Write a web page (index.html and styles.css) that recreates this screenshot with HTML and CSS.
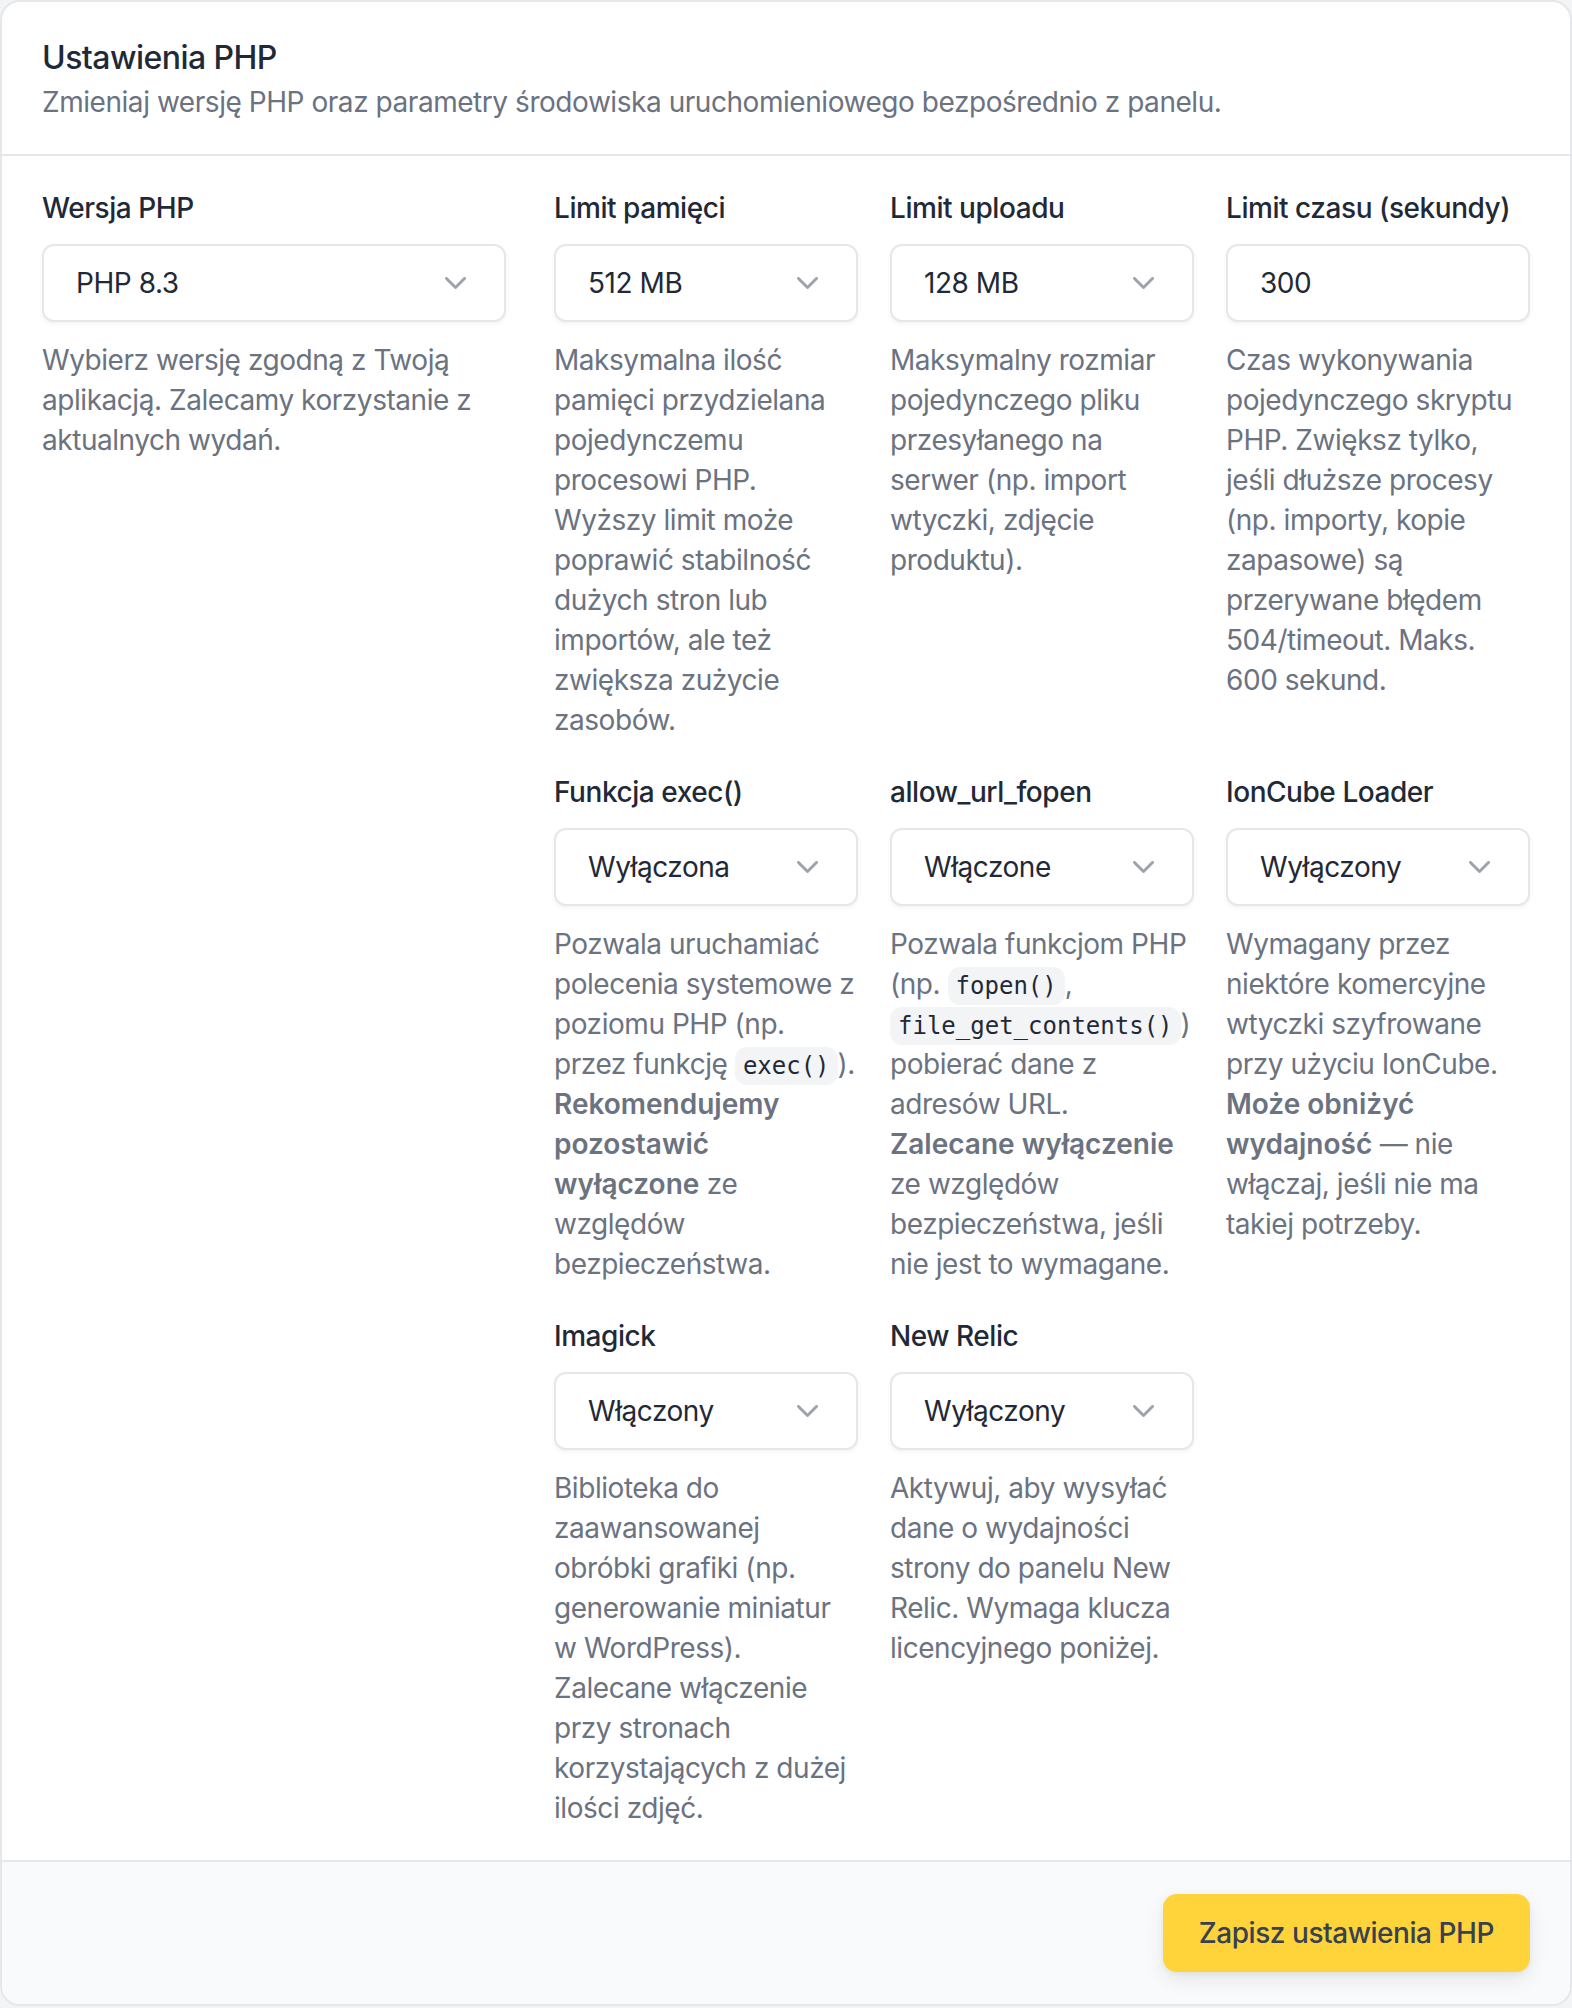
FILE: index.html
```html
<!DOCTYPE html>
<html lang="pl">
<head>
    <meta charset="UTF-8">
    <meta name="viewport" content="width=device-width, initial-scale=1.0">
    <title>Ustawienia PHP</title>
    <link rel="stylesheet" href="styles.css">
</head>
<body>
    <form class="card">
        <div class="card-header">
            <h2>Ustawienia PHP</h2>
            <p>Zmieniaj wersję PHP oraz parametry środowiska uruchomieniowego bezpośrednio z panelu.</p>
        </div>

        <div class="card-body">
            <div class="field field-version">
                <label class="field-label" for="phpVersion">Wersja PHP</label>
                <select class="field-control" id="phpVersion">
                    <option>PHP 8.3</option>
                    <option>PHP 8.2</option>
                    <option>PHP 8.1</option>
                </select>
                <p class="field-help">Wybierz wersję zgodną z Twoją aplikacją. Zalecamy korzystanie z aktualnych wydań.</p>
            </div>

            <div class="field-grid">
                <div class="field">
                    <label class="field-label" for="memoryLimit">Limit pamięci</label>
                    <select class="field-control" id="memoryLimit">
                        <option>512 MB</option>
                        <option>256 MB</option>
                        <option>1024 MB</option>
                    </select>
                    <p class="field-help">Maksymalna ilość pamięci przydzielana pojedynczemu procesowi PHP. Wyższy limit może poprawić stabilność dużych stron lub importów, ale też zwiększa zużycie zasobów.</p>
                </div>

                <div class="field">
                    <label class="field-label" for="uploadLimit">Limit uploadu</label>
                    <select class="field-control" id="uploadLimit">
                        <option>128 MB</option>
                        <option>64 MB</option>
                        <option>256 MB</option>
                    </select>
                    <p class="field-help">Maksymalny rozmiar pojedynczego pliku przesyłanego na serwer (np. import wtyczki, zdjęcie produktu).</p>
                </div>

                <div class="field">
                    <label class="field-label" for="timeLimit">Limit czasu (sekundy)</label>
                    <input class="field-control field-input" id="timeLimit" type="number" value="300" min="30" max="600">
                    <p class="field-help">Czas wykonywania pojedynczego skryptu PHP. Zwiększ tylko, jeśli dłuższe procesy (np. importy, kopie zapasowe) są przerywane błędem 504/timeout. Maks. 600 sekund.</p>
                </div>

                <div class="field">
                    <label class="field-label" for="execFunc">Funkcja exec()</label>
                    <select class="field-control" id="execFunc">
                        <option>Wyłączona</option>
                        <option>Włączona</option>
                    </select>
                    <p class="field-help">Pozwala uruchamiać polecenia systemowe z poziomu PHP (np. przez funkcję <code>exec()</code>). <strong>Rekomendujemy pozostawić wyłączone</strong> ze względów bezpieczeństwa.</p>
                </div>

                <div class="field">
                    <label class="field-label" for="urlFopen">allow_url_fopen</label>
                    <select class="field-control" id="urlFopen">
                        <option>Włączone</option>
                        <option>Wyłączone</option>
                    </select>
                    <p class="field-help">Pozwala funkcjom PHP (np. <code>fopen()</code>, <code>file_get_contents()</code>) pobierać dane z adresów URL. <strong>Zalecane wyłączenie</strong> ze względów bezpieczeństwa, jeśli nie jest to wymagane.</p>
                </div>

                <div class="field">
                    <label class="field-label" for="ioncube">IonCube Loader</label>
                    <select class="field-control" id="ioncube">
                        <option>Wyłączony</option>
                        <option>Włączony</option>
                    </select>
                    <p class="field-help">Wymagany przez niektóre komercyjne wtyczki szyfrowane przy użyciu IonCube. <strong>Może obniżyć wydajność</strong> — nie włączaj, jeśli nie ma takiej potrzeby.</p>
                </div>

                <div class="field">
                    <label class="field-label" for="imagick">Imagick</label>
                    <select class="field-control" id="imagick">
                        <option>Włączony</option>
                        <option>Wyłączony</option>
                    </select>
                    <p class="field-help">Biblioteka do zaawansowanej obróbki grafiki (np. generowanie miniatur w WordPress). Zalecane włączenie przy stronach korzystających z dużej ilości zdjęć.</p>
                </div>

                <div class="field">
                    <label class="field-label" for="newRelic">New Relic</label>
                    <select class="field-control" id="newRelic">
                        <option>Wyłączony</option>
                        <option>Włączony</option>
                    </select>
                    <p class="field-help">Aktywuj, aby wysyłać dane o wydajności strony do panelu New Relic. Wymaga klucza licencyjnego poniżej.</p>
                </div>
            </div>
        </div>

        <div class="card-footer">
            <button type="submit" class="btn-save">Zapisz ustawienia PHP</button>
        </div>
    </form>
</body>
</html>
```

FILE: styles.css
```css
* {
    margin: 0;
    padding: 0;
    box-sizing: border-box;
}

body {
    font-family: 'Inter', 'Noto Sans', sans-serif;
    background: #f3f4f6;
    color: #1f2937;
    font-size: 28px;
    line-height: 40px;
    letter-spacing: -0.45px;
}

.card {
    display: block;
    background: #fff;
    border: 2px solid #e5e7eb;
    border-radius: 20px;
    overflow: hidden;
}

.card-header {
    padding: 32px 40px;
    border-bottom: 2px solid #e5e7eb;
}

.card-header h2 {
    font-size: 32px;
    line-height: 48px;
    font-weight: 500;
    letter-spacing: -0.55px;
    color: #1f2937;
}

.card-header p {
    color: #6b7280;
}

.card-body {
    display: grid;
    grid-template-columns: repeat(12, 1fr);
    gap: 48px;
    padding: 32px 40px;
}

.field-version {
    grid-column: span 4;
}

.field-grid {
    grid-column: span 8;
    display: grid;
    grid-template-columns: repeat(3, 1fr);
    gap: 32px;
    align-items: start;
}

.field-label {
    display: block;
    font-weight: 500;
    color: #1f2937;
    margin-bottom: 16px;
}

.field-control {
    display: block;
    width: 100%;
    height: 78px;
    padding: 0 70px 0 32px;
    font-family: inherit;
    font-size: 28px;
    letter-spacing: inherit;
    color: #1f2937;
    background: #fff url("data:image/svg+xml,%3Csvg xmlns='http://www.w3.org/2000/svg' width='21' height='12' viewBox='0 0 21 12'%3E%3Cpath d='M1.5 1.5l9 9 9-9' fill='none' stroke='%239ca3af' stroke-width='3' stroke-linecap='round' stroke-linejoin='round'/%3E%3C/svg%3E") no-repeat right 38px center;
    border: 2px solid #e5e7eb;
    border-radius: 12px;
    box-shadow: 0 2px 4px rgba(0, 0, 0, 0.05);
    appearance: none;
    -webkit-appearance: none;
}

.field-input {
    background-image: none;
    padding-right: 32px;
}

.field-input::-webkit-inner-spin-button,
.field-input::-webkit-outer-spin-button {
    -webkit-appearance: none;
    margin: 0;
}

.field-help {
    margin-top: 18px;
    color: #6b7280;
}

.field-help strong {
    font-weight: 600;
    letter-spacing: 0;
    color: #6b7280;
}

.field-help code {
    font-family: 'DejaVu Sans Mono', 'Liberation Mono', monospace;
    font-size: 24px;
    line-height: 1;
    letter-spacing: 0;
    color: #1f2937;
    background: #f3f4f6;
    padding: 5px 8px;
    border-radius: 12px;
}

.card-footer {
    display: flex;
    justify-content: flex-end;
    padding: 32px 40px;
    background: #f9fafb;
    border-top: 2px solid #e5e7eb;
}

.btn-save {
    font-family: inherit;
    font-size: 28px;
    line-height: 40px;
    font-weight: 500;
    letter-spacing: inherit;
    color: #374151;
    background: #ffd43b;
    border: none;
    border-radius: 14px;
    padding: 19px 36px;
    cursor: pointer;
    box-shadow: 0 8px 20px rgba(0, 0, 0, 0.08), 0 2px 6px rgba(0, 0, 0, 0.05);
}

.btn-save:hover {
    background: #fcc419;
}
```
